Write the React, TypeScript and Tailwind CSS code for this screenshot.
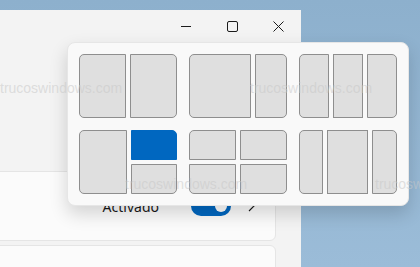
import React from "react";

function Zone({ className = "", blue = false }: { className?: string; blue?: boolean }) {
  return (
    <div
      className={
        (blue ? "bg-[#0067c0] border border-[#0067c0] " : "bg-[#dfdfdf] border border-[#8e8e8e] ") + className
      }
    />
  );
}

function Watermark({ className }: { className: string }) {
  return (
    <div
      className={
        "pointer-events-none absolute z-20 whitespace-nowrap text-[14px] leading-4 text-[rgba(200,200,200,0.55)] " +
        className
      }
      style={{ fontFamily: '"Liberation Sans", Arial, sans-serif' }}
    >
      trucoswindows.com
    </div>
  );
}

function SnapFlyout() {
  return (
    <div className="absolute left-[67px] top-[42px] z-10 grid grid-cols-[98px_98px_98px] grid-rows-[64px_64px] gap-x-3 gap-y-3 rounded-lg border border-[#e6e6e6] bg-[#f9f9f9] p-[11px] shadow-[0_8px_18px_rgba(0,0,0,0.16)]">
      {/* 50 / 50 */}
      <div className="flex gap-1">
        <Zone className="flex-1 rounded-l-[5px]" />
        <Zone className="flex-1 rounded-r-[5px]" />
      </div>
      {/* 66 / 33 */}
      <div className="flex gap-1">
        <Zone className="flex-[2] rounded-l-[5px]" />
        <Zone className="flex-1 rounded-r-[5px]" />
      </div>
      {/* thirds */}
      <div className="flex gap-1">
        <Zone className="flex-1 rounded-l-[5px]" />
        <Zone className="flex-1" />
        <Zone className="flex-1 rounded-r-[5px]" />
      </div>
      {/* half + two quarters */}
      <div className="flex gap-1">
        <Zone className="flex-1 rounded-l-[5px]" />
        <div className="flex flex-1 flex-col gap-1">
          <Zone blue className="flex-1 rounded-tr-[5px]" />
          <Zone className="flex-1 rounded-br-[5px]" />
        </div>
      </div>
      {/* quarters */}
      <div className="grid grid-cols-2 grid-rows-2 gap-1">
        <Zone className="rounded-tl-[5px]" />
        <Zone className="rounded-tr-[5px]" />
        <Zone className="rounded-bl-[5px]" />
        <Zone className="rounded-br-[5px]" />
      </div>
      {/* 25 / 50 / 25 */}
      <div className="flex gap-1">
        <Zone className="w-[24px] rounded-l-[5px]" />
        <Zone className="flex-1" />
        <Zone className="w-[25px] rounded-r-[5px]" />
      </div>
    </div>
  );
}

export default function App() {
  return (
    <div
      className="relative h-[267px] w-[420px] overflow-hidden bg-gradient-to-b from-[#8db0cd] to-[#9bbcd8] pt-[10px]"
      style={{ fontFamily: '"Noto Sans", "Open Sans", sans-serif' }}
    >
      <div className="h-[257px] w-[301px] overflow-hidden bg-[#f3f3f3]">
        {/* title bar */}
        <div className="flex h-8 justify-end text-[#1b1b1b]">
          <div className="flex w-[46px] items-center justify-center">
            <svg width="10" height="10" viewBox="0 0 10 10">
              <path d="M0 5.5h10" stroke="currentColor" strokeWidth="1" />
            </svg>
          </div>
          <div className="flex w-[46px] items-center justify-center">
            <svg width="11" height="11" viewBox="0 0 11 11">
              <rect x="0.5" y="0.5" width="10" height="10" rx="1.5" fill="none" stroke="currentColor" strokeWidth="1" />
            </svg>
          </div>
          <div className="flex w-[46px] items-center justify-center">
            <svg width="11" height="11" viewBox="0 0 11 11">
              <path d="M0.5 0.5l10 10M10.5 0.5l-10 10" stroke="currentColor" strokeWidth="1" />
            </svg>
          </div>
        </div>

        {/* settings content */}
        <div className="flex flex-col gap-1 pt-[129px]">
          <div className="ml-[-8px] flex h-[70px] w-[284px] items-center justify-end rounded-r-md border border-[#e5e5e5] bg-[#fbfbfb] pr-[20px]">
            <span className="mr-[32px] text-[14px] text-[#1a1a1a]">Activado</span>
            <div className="flex h-5 w-10 items-center justify-end rounded-full bg-[#0067c0] pr-[4px]">
              <div className="h-3 w-3 rounded-full bg-white" />
            </div>
            <svg className="ml-[16px]" width="8" height="12" viewBox="0 0 8 12">
              <path d="M2 1l5 5-5 5" fill="none" stroke="#1a1a1a" strokeWidth="1.1" />
            </svg>
          </div>
          <div className="ml-[-8px] h-[40px] w-[284px] rounded-r-md border border-[#e5e5e5] bg-[#fbfbfb]" />
        </div>
      </div>

      <SnapFlyout />

      <Watermark className="left-0 top-[80px]" />
      <Watermark className="left-[250px] top-[80px]" />
      <Watermark className="left-[125px] top-[176px]" />
      <Watermark className="left-[375px] top-[176px]" />
    </div>
  );
}
